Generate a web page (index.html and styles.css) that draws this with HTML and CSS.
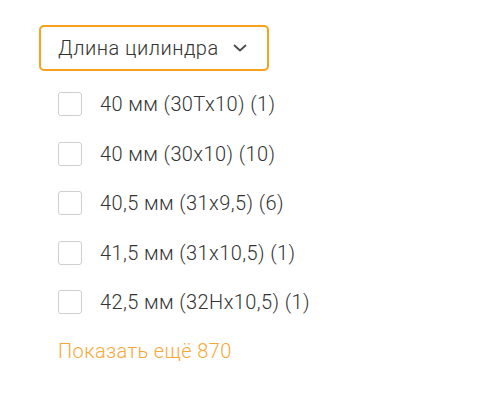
FILE: index.html
```html
<!DOCTYPE html>
<html lang="ru">
<head>
<meta charset="utf-8">
<link rel="stylesheet" href="styles.css">
</head>
<body>
<div class="filter">
  <button class="toggle">
    <span class="toggle-label">Длина цилиндра</span>
    <svg class="chevron" width="14" height="8" viewBox="0 0 14 8"><path d="M1.5 1.5 L7 6.5 L12.5 1.5" fill="none" stroke="#4a4a4a" stroke-width="1.8" stroke-linecap="round" stroke-linejoin="round"/></svg>
  </button>
  <ul class="options">
    <li class="option"><span class="box"></span><span class="label">40 мм (30Тх10) (1)</span></li>
    <li class="option"><span class="box"></span><span class="label">40 мм (30х10) (10)</span></li>
    <li class="option"><span class="box"></span><span class="label">40,5 мм (31х9,5) (6)</span></li>
    <li class="option"><span class="box"></span><span class="label">41,5 мм (31х10,5) (1)</span></li>
    <li class="option"><span class="box"></span><span class="label">42,5 мм (32Нх10,5) (1)</span></li>
  </ul>
  <a class="more">Показать ещё 870</a>
</div>
</body>
</html>
```
FILE: styles.css
```css
html, body {
  margin: 0;
  padding: 0;
  background: #fff;
}
body {
  font-family: Roboto, "Noto Sans", sans-serif;
  font-weight: 300;
  color: #333;
}
.filter {
  padding: 25px 0 0 39px;
  display: flex;
  flex-direction: column;
  align-items: flex-start;
}
.toggle {
  box-sizing: border-box;
  width: 230px;
  height: 46px;
  border: 2px solid #f7a21b;
  border-radius: 5px;
  background: #fff;
  display: flex;
  align-items: center;
  justify-content: space-between;
  padding: 0 20px 0 17px;
  font-family: inherit;
  font-weight: 300;
  font-size: 20px;
  letter-spacing: 0.5px;
  color: #333;
}
.chevron {
  display: block;
}
.options {
  list-style: none;
  margin: 21px 0 0 0;
  padding: 0 0 0 19px;
  display: flex;
  flex-direction: column;
  gap: 25.5px;
}
.option {
  display: flex;
  align-items: center;
  gap: 18px;
  height: 24px;
}
.box {
  box-sizing: border-box;
  width: 24px;
  height: 24px;
  border: 1px solid #cfcfcf;
  border-radius: 3px;
  background: #fff;
}
.label {
  font-size: 20px;
  letter-spacing: 0.4px;
  color: #333;
}
.more {
  margin: 25px 0 0 19px;
  font-size: 20px;
  letter-spacing: 0.4px;
  color: #f7a838;
  cursor: pointer;
}
```
